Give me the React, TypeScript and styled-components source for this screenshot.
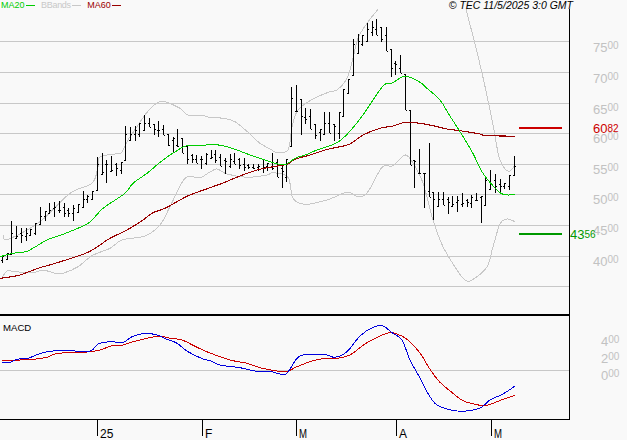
import React from "react";
import styled, { createGlobalStyle } from "styled-components";

const Global = createGlobalStyle`
  html, body { margin: 0; padding: 0; background: #f9f9f9; }
`;

const Frame = styled.div`
  position: relative;
  width: 627px;
  height: 440px;
  overflow: hidden;
  background: #f9f9f9;
  font-family: "Liberation Sans", Arial, sans-serif;
`;

const Header = styled.div`
  position: absolute;
  inset: 0 54px auto 1px;
  height: 10px;
  display: flex;
  align-items: center;
  justify-content: space-between;
`;

const Legend = styled.div`
  display: flex;
  align-items: center;
  gap: 6px;
`;

const LegendItem = styled.div<{ $color: string; $spacing?: number }>`
  display: flex;
  align-items: center;
  gap: 1.5px;
  color: ${(p) => p.$color};
  font-size: 9px;
  line-height: 10px;
  letter-spacing: ${(p) => p.$spacing ?? 0}px;
`;

const LegendDash = styled.span`
  width: 9px;
  height: 1px;
  background: currentColor;
`;

const Copyright = styled.div`
  color: #000;
  font-size: 10.5px;
  line-height: 10px;
  font-style: italic;
`;

const Chart = styled.svg`
  display: block;
  width: 627px;
  height: 440px;
`;

const AxisText = styled.text<{ $color: string }>`
  font-family: "Liberation Sans", Arial, sans-serif;
  font-size: 13px;
  fill: ${(p) => p.$color};
`;

const MonthText = styled.text`
  font-family: "Liberation Sans", Arial, sans-serif;
  font-size: 12px;
  fill: #000;
`;

const PanelTitle = styled.text`
  font-family: "Liberation Sans", Arial, sans-serif;
  font-size: 9.6px;
  fill: #000;
`;

const Small = styled.tspan`
  font-size: 10px;
`;

type Pt = [number, number];
const smooth = (pts: Pt[]) => {
  let d = `M${pts[0][0]} ${pts[0][1]}`;
  for (let i = 0; i < pts.length - 1; i++) {
    const p0 = pts[i - 1] ?? pts[i];
    const p1 = pts[i];
    const p2 = pts[i + 1];
    const p3 = pts[i + 2] ?? p2;
    const c1x = p1[0] + (p2[0] - p0[0]) / 6;
    const c1y = p1[1] + (p2[1] - p0[1]) / 6;
    const c2x = p2[0] - (p3[0] - p1[0]) / 6;
    const c2y = p2[1] - (p3[1] - p1[1]) / 6;
    d += `C${c1x.toFixed(1)} ${c1y.toFixed(1)} ${c2x.toFixed(1)} ${c2y.toFixed(1)} ${p2[0]} ${p2[1]}`;
  }
  return d;
};

const ma60: Pt[] = [[0,278.3],[7,277.3],[20,275],[38,268.3],[53,264],[72,258],[90,251.3],[110,238.3],[127,230],[143,220],[153,212.7],[165,208.3],[180,200],[190,195],[210,187.7],[223,183],[240,176],[257,170],[273,166.7],[287,164.3],[295,159.3],[310,155],[325,150],[337,147.3],[350,144],[363,135],[380,128.3],[393,126],[405,122.3],[420,123.3],[433,125.7],[447,129],[460,130.7],[480,134],[485,135.7],[503,136],[515,136.3]];
const ma20: Pt[] = [[0,256.7],[13,253.3],[27,251.3],[47,240],[63,234.3],[88,223.3],[103,208.3],[125,193.3],[133,183.3],[147,173.3],[163,160],[178,150],[187,145.7],[203,145.7],[210,144.3],[223,145.7],[237,150],[250,155],[263,159.3],[273,162.7],[285,164.7],[295,158.3],[307,154.3],[317,150],[337,142.7],[348,133.3],[363,115],[383,86],[393,82.7],[405,76],[420,82.3],[427,88.3],[440,100],[448,113],[460,131.7],[472,151.7],[482,171.7],[488,180],[500,192.7],[508,195],[515,194]];
const bbUpperA: Pt[] = [[3,235],[8,239.3],[40,221.7],[70,193.3],[92,183.3],[98,166.7],[100,156.7],[120,153.3],[123,150],[128,140],[137,126.7],[145,115],[153,106],[163,101.3],[180,108.3],[188,115],[203,115.7],[210,117.3],[223,118.3],[235,121.7],[250,134],[260,143.3],[272,150],[275,152],[288,150],[292,126.7],[298,110],[313,99],[330,91.7],[337,90],[347,78.3],[353,58.3],[358,38.3],[367,23.3],[378,9.3]];
const bbUpperB: Pt[] = [[466,9.3],[474,40],[482,73],[490,110],[494,130],[499,157],[505,169],[510,171],[515,165]];
const bbLower: Pt[] = [[2,278],[7,271],[15,271.7],[33,272.7],[43,270],[55,273.3],[63,273.3],[78,266.7],[92,255.7],[110,248.3],[122,240],[145,236],[160,225],[170,206.7],[185,178.3],[200,177.7],[210,172],[217,169],[227,174],[247,177.3],[267,175],[273,172.7],[288,177.3],[293,198.3],[305,204.3],[327,200],[347,192.3],[358,196.7],[368,191.7],[382,167.3],[393,165.7],[405,155],[413,163],[423,183],[433,220],[443,246.7],[457,270],[465,280],[472,280],[487,266.7],[493,246.7],[500,224],[507,219],[515,221.7]];
const macdRed: Pt[] = [[2,360.7],[33,359.3],[47,357.3],[55,354],[67,352.7],[87,352],[100,350],[113,345.3],[123,345],[133,341.7],[147,338.3],[160,336],[170,338.3],[182,340],[197,347.3],[210,353],[230,360],[247,363.3],[260,367.7],[277,371],[288,371],[297,366.7],[313,360.7],[323,358.7],[337,358.3],[350,355],[367,342.7],[387,333.3],[397,334],[408,340],[420,353],[430,369.3],[440,382.3],[453,393.3],[463,400.7],[477,404.7],[487,405.3],[503,399.3],[515,395.3]];
const macdBlue: Pt[] = [[2,362.3],[10,362.3],[17,359.3],[28,358.3],[38,354.3],[50,351.3],[67,350.7],[90,351],[98,344],[110,341.7],[123,342.3],[132,336.7],[145,333.3],[157,335],[167,339.3],[177,343.3],[188,351.7],[203,359],[210,360.7],[220,365],[240,367.7],[257,371.3],[270,371.3],[280,374],[287,373.3],[297,358.3],[307,354.3],[327,355],[335,357.3],[347,351.7],[360,336],[373,327.3],[383,326],[392,332.7],[402,340],[410,360],[420,378],[427,391.7],[435,403.3],[447,409],[462,411.3],[480,408],[490,400],[503,394],[515,386]];

const ranges: [number, number][] = [[256,263],[253,259],[221,254],[226,239],[228,243],[228,241],[229,236],[223,235],[207,224],[211,221],[203,213],[202,217],[201,213],[203,217],[208,217],[205,221],[204,212],[191,207],[195,203],[191,200],[157,190],[153,174],[160,183],[156,171],[163,176],[162,174],[126,160],[127,140],[126,141],[123,137],[115,131],[118,127],[124,135],[121,137],[125,135],[134,146],[137,152],[129,147],[138,153],[145,164],[154,163],[155,163],[156,169],[153,165],[150,158],[150,163],[154,166],[158,174],[154,168],[153,164],[158,169],[158,171],[164,169],[164,169],[164,171],[159,173],[163,171],[153,170],[159,177],[165,188],[159,182],[87,146],[85,111],[99,135],[108,124],[109,129],[124,139],[129,141],[112,134],[112,133],[124,141],[112,139],[89,116],[79,93],[39,75],[34,53],[35,46],[23,41],[21,36],[19,35],[27,42],[27,51],[49,77],[61,75],[55,73],[74,110],[110,165],[160,188],[149,173],[173,208],[143,197],[192,220],[192,206],[192,205],[197,214],[196,207],[196,212],[193,207],[199,207],[195,208],[193,200],[196,223],[177,205],[170,189],[174,193],[179,192],[183,189],[175,190],[156,175]];

const barX = (i: number) => Math.floor(2.5 + i * 4.74) + 0.5;
const clamp = (v: number, a: number, b: number) => Math.min(b, Math.max(a, v));
const mid = (r: [number, number]) => (r[0] + r[1]) / 2;

const bars = ranges.map((r, i) => {
  const x = barX(i);
  const prev = ranges[i - 1] ?? r;
  const next = ranges[i + 1] ?? r;
  const open = Math.round(clamp(mid(prev), r[0], r[1])) + 0.5;
  const close = Math.round(clamp(mid(next), r[0], r[1])) + 0.5;
  return `M${x} ${r[0]}V${r[1]}M${x - 1.5} ${open}H${x}M${x} ${close}H${x + 1.5}`;
}).join("");

const gridY = [41, 72, 103, 133, 164, 194, 225, 256, 286];
const priceLabels: [string, number][] = [["75", 52], ["70", 83], ["65", 114], ["60", 143], ["55", 174], ["50", 204], ["45", 235], ["40", 266]];
const macdLabels: [string, number][] = [["4", 346], ["2", 363], ["0", 380]];
const monthTicks: [string, number, number?][] = [["25", 97.5], ["F", 202.5], ["M", 296.5, 8], ["A", 396.5], ["M", 491.5, 8]];

export default function App() {
  return (
    <Frame>
      <Global />
      <Chart viewBox="0 0 627 440">
        <g shapeRendering="crispEdges" stroke="#c8c8c8" strokeWidth="1">
          {gridY.map((y) => <line key={y} x1="0" x2="569" y1={y + 0.5} y2={y + 0.5} />)}
          <line x1="0" x2="569" y1="370.5" y2="370.5" />
        </g>
        <g fill="none" stroke="#c8c8c8" strokeWidth="1" shapeRendering="crispEdges">
          <path d={smooth(bbUpperA)} />
          <path d={smooth(bbUpperB)} />
          <path d={smooth(bbLower)} />
        </g>
        <path d={bars} stroke="#000" strokeWidth="1" fill="none" shapeRendering="crispEdges" />
        <g fill="none" strokeWidth="1" shapeRendering="crispEdges">
          <path d={smooth(ma60)} stroke="#990000" strokeWidth="1.1" />
          <path d={smooth(ma20)} stroke="#00cc00" />
          <path d={smooth(macdRed)} stroke="#cc0000" />
          <path d={smooth(macdBlue)} stroke="#0000dd" />
        </g>
        <g shapeRendering="crispEdges" stroke="#000" fill="none">
          <line x1="569.5" x2="569.5" y1="9" y2="419.5" />
          <line x1="0" x2="570" y1="315" y2="315" strokeWidth="2" />
          <line x1="0" x2="570" y1="419.5" y2="419.5" />
          {monthTicks.map(([, x], i) => <line key={i} x1={x} x2={x} y1="419" y2="436" />)}
        </g>
        <g shapeRendering="crispEdges">
          <rect x="519" y="127" width="43" height="2" fill="#cc0000" />
          <rect x="519" y="233" width="43" height="2" fill="#009900" />
        </g>
        {priceLabels.map(([a, y]) => (
          <AxisText key={a} $color="#c2c2c2" x="593" y={y}>{a}<Small dy="-3">00</Small></AxisText>
        ))}
        <AxisText $color="#cc0000" x="593" y="133">60<Small dy="-1">82</Small></AxisText>
        <AxisText $color="#009900" x="570" y="239">43<Small dy="-1">56</Small></AxisText>
        {macdLabels.map(([a, y]) => (
          <AxisText key={y} $color="#c2c2c2" x="601" y={y}>{a}<Small dy="-3">00</Small></AxisText>
        ))}
        {monthTicks.map(([t, x, w], i) => (
          <MonthText key={i} x={x + 2.5} y="437.5" textLength={w} lengthAdjust={w ? "spacingAndGlyphs" : undefined}>{t}</MonthText>
        ))}
        <PanelTitle x="3" y="331">MACD</PanelTitle>
      </Chart>
      <Header>
        <Legend>
          <LegendItem $color="#00cc00">MA20<LegendDash /></LegendItem>
          <LegendItem $color="#c8c8c8" $spacing={-0.3}>BBands<LegendDash /></LegendItem>
          <LegendItem $color="#990000">MA60<LegendDash /></LegendItem>
        </Legend>
        <Copyright>© TEC 11/5/2025 3:0 GMT</Copyright>
      </Header>
    </Frame>
  );
}
